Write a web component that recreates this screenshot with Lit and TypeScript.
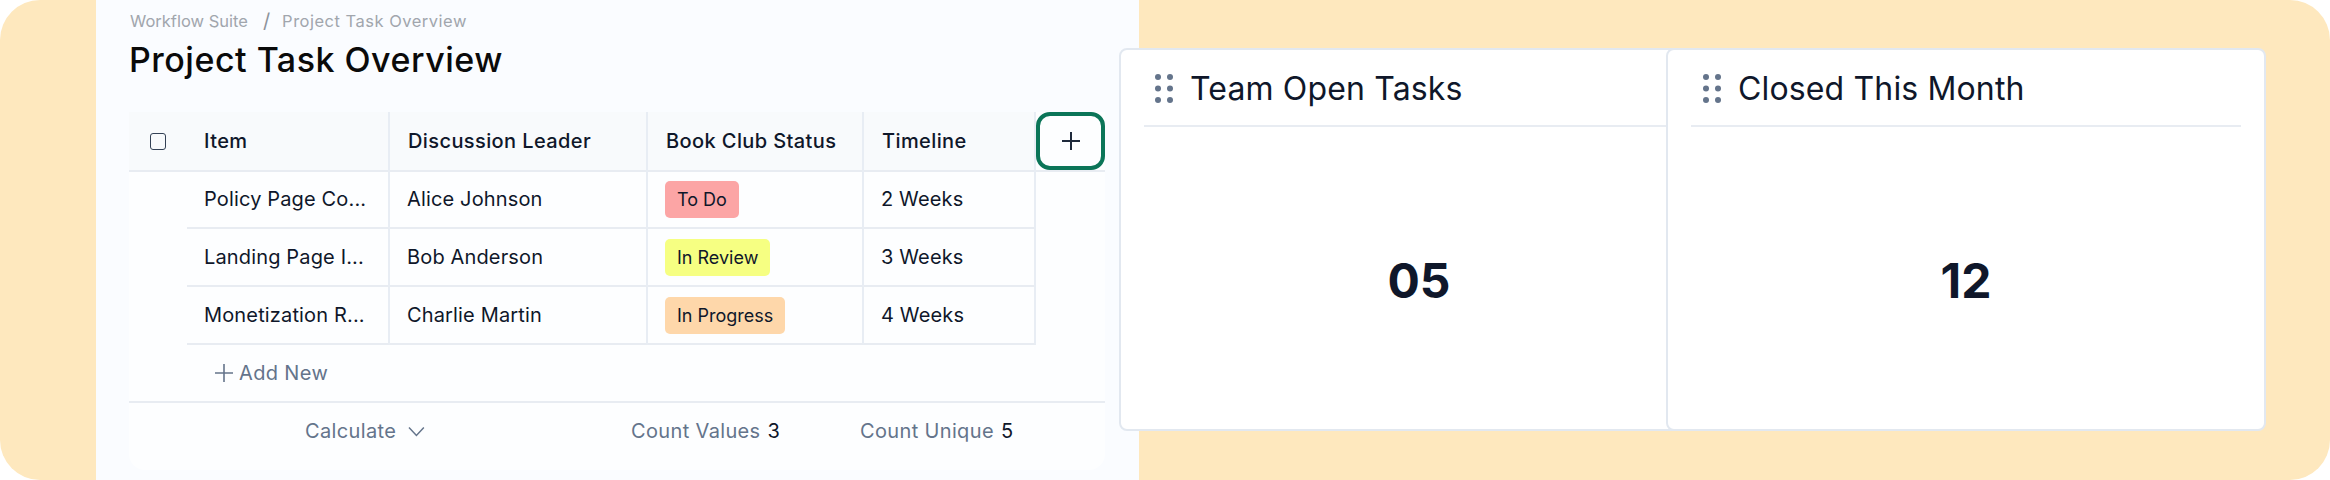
import { LitElement, html, css } from "lit";
import { customElement } from "lit/decorators.js";

const rows = [
  { item: "Policy Page Co...", lead: "Alice Johnson", status: "To Do", cls: "todo", time: "2 Weeks" },
  { item: "Landing Page I...", lead: "Bob Anderson", status: "In Review", cls: "review", time: "3 Weeks" },
  { item: "Monetization R...", lead: "Charlie Martin", status: "In Progress", cls: "progress", time: "4 Weeks" },
];

const grip = html`<svg class="grip" width="18" height="29" viewBox="0 0 18 29" fill="#64748B">
  <circle cx="3" cy="3" r="3"/><circle cx="15" cy="3" r="3"/>
  <circle cx="3" cy="14.5" r="3"/><circle cx="15" cy="14.5" r="3"/>
  <circle cx="3" cy="26" r="3"/><circle cx="15" cy="26" r="3"/>
</svg>`;

@customElement("app-root")
export class AppRoot extends LitElement {
  static styles = css`
    :host { display: block; width: 2330px; height: 480px; background: #fff; font-family: Inter, "Liberation Sans", sans-serif; color: #0f172a; }
    .frame { width: 2330px; height: 480px; background: #fee8be; border-radius: 40px; display: flex; align-items: flex-start; overflow: hidden; padding-left: 96px; box-sizing: border-box; }
    .panel { width: 1043px; height: 480px; flex: none; background: #fafcff; box-sizing: border-box; padding: 9px 0 0 33px; }
    .crumbs { height: 24px; display: flex; align-items: center; gap: 15px; font: 400 16.5px/24px Inter, sans-serif; color: #a1a6ad; padding-left: 1px; }
    .crumbs .sep { font-size: 20px; color: #8d939b; }
    .crumbs .last { letter-spacing: 0.5px; margin-left: -3px; }
    h1 { margin: 3px 0 0 0; font: 500 34px/48px Inter, sans-serif; color: #0a0a0a; height: 48px; letter-spacing: 0.5px; }
    .tablecard { margin-top: 28px; width: 976px; height: 358px; background: #fdfeff; border-radius: 0 0 16px 16px; }
    .row { display: grid; grid-template-columns: 59px 202px 258px 216px 172px 69px; height: 58px; box-sizing: border-box; font-size: 20px; letter-spacing: 0.15px; }
    .row.head { height: 59px; letter-spacing: 0.4px; }
    .cell { display: flex; align-items: center; padding-left: 16px; box-sizing: border-box; border-bottom: 2px solid #e8ecf2; border-right: 2px solid #e8edf4; min-width: 0; white-space: nowrap; }
    .head .cell { background: #f8fafc; font-weight: 500; color: #0f172a; }
    .head .cell.check { border-right: 0; justify-content: center; padding: 0 1px 0 0; }
    .body .gutter { margin-right: -1px; }
    .head .item { padding-left: 16px; }
    .body .item { padding-left: 16px; }
    .body .cell.item { margin-left: -1px; padding-left: 17px; }
    .head .time { padding-left: 18px; }
    .body .time { padding-left: 17px; }
    .body .status { padding-left: 17px; }
    .head .status { padding-left: 18px; }
    .lead { padding-left: 18px; }
    .body .lead { padding-left: 17px; }
    .box { width: 16px; height: 17px; border: 1.5px solid #334155; border-radius: 3px; box-sizing: border-box; }
    .btncell { border-bottom: 2px solid #e8ecf2; background: #fdfeff; display: flex; }
    .plusbtn { width: 69px; height: 58px; border: 4px solid #0b7558; border-radius: 14px; box-sizing: border-box; display: flex; align-items: center; justify-content: center; background: #fdfeff; }
    .pill { display: inline-flex; align-items: center; height: 37px; padding: 0 12px; border-radius: 5px; font-size: 18px; letter-spacing: 0; }
    .todo { background: #fca5a5; }
    .review { background: #f6ff82; }
    .progress { background: #fed7aa; }
    .addrow { height: 58px; box-sizing: border-box; border-bottom: 2px solid #e8ecf2; display: flex; align-items: center; padding-left: 85px; gap: 5px; color: #64748b; font-size: 20px; letter-spacing: 0.35px; }
    .foot { display: flex; align-items: center; height: 56px; padding-left: 176px; font-size: 20px; color: #64748b; letter-spacing: 0.35px; }
    .calc { display: flex; align-items: center; gap: 12px; width: 120px; margin-right: 206px; }
    .count { display: flex; gap: 7px; white-space: nowrap; }
    .count b { font-weight: 400; color: #0f172a; }
    .count.first { width: 148px; margin-right: 81px; }
    .card { flex: none; width: 600px; height: 383px; margin-top: 48px; background: #fff; border: 2px solid #e2e8f0; border-radius: 8px; box-sizing: border-box; padding: 0 23px; display: flex; flex-direction: column; position: relative; }
    .card.one { margin-left: -20px; }
    .card.two { margin-left: -53px; }
    .chead { height: 77px; flex: none; box-sizing: border-box; padding: 2px 0 0 11px; display: flex; align-items: center; gap: 17px; border-bottom: 2px solid #e8ecf2; }
    .two .chead { padding-left: 12px; }
    .chead span { font-size: 32px; font-weight: 400; color: #0f172a; line-height: 40px; letter-spacing: 0.15px; }
    .grip { flex: none; }
    .num { flex: 1; display: flex; align-items: center; justify-content: center; padding-top: 5px; font-size: 48px; font-weight: 700; color: #0f172a; }
  `;

  render() {
    return html`<div class="frame">
      <section class="panel">
        <div class="crumbs"><span>Workflow Suite</span><span class="sep">/</span><span class="last">Project Task Overview</span></div>
        <h1>Project Task Overview</h1>
        <div class="tablecard">
          <div class="row head">
            <div class="cell check"><div class="box"></div></div>
            <div class="cell item">Item</div>
            <div class="cell lead">Discussion Leader</div>
            <div class="cell status">Book Club Status</div>
            <div class="cell time">Timeline</div>
            <div class="btncell"><div class="plusbtn">
              <svg width="20" height="20" viewBox="0 0 20 20" fill="none" stroke="#1e293b" stroke-width="2"><path d="M10 1v18M1 10h18"/></svg>
            </div></div>
          </div>
          ${rows.map(
            (r) => html`<div class="row body">
              <div class="gutter"></div>
              <div class="cell item">${r.item}</div>
              <div class="cell lead">${r.lead}</div>
              <div class="cell status"><span class="pill ${r.cls}">${r.status}</span></div>
              <div class="cell time">${r.time}</div>
            </div>`
          )}
          <div class="addrow">
            <svg width="20" height="20" viewBox="0 0 20 20" fill="none" stroke="#64748b" stroke-width="1.6"><path d="M10 1v18M1 10h18"/></svg>
            <span>Add New</span>
          </div>
          <div class="foot">
            <div class="calc"><span>Calculate</span>
              <svg width="17" height="11" viewBox="0 0 17 11" fill="none" stroke="#64748b" stroke-width="1.5"><path d="M1 1.5l7.5 8 7.5-8"/></svg>
            </div>
            <div class="count first"><span>Count Values</span><b>3</b></div>
            <div class="count"><span>Count Unique</span><b>5</b></div>
          </div>
        </div>
      </section>
      <article class="card one">
        <div class="chead">${grip}<span>Team Open Tasks</span></div>
        <div class="num">05</div>
      </article>
      <article class="card two">
        <div class="chead">${grip}<span>Closed This Month</span></div>
        <div class="num">12</div>
      </article>
    </div>`;
  }
}
